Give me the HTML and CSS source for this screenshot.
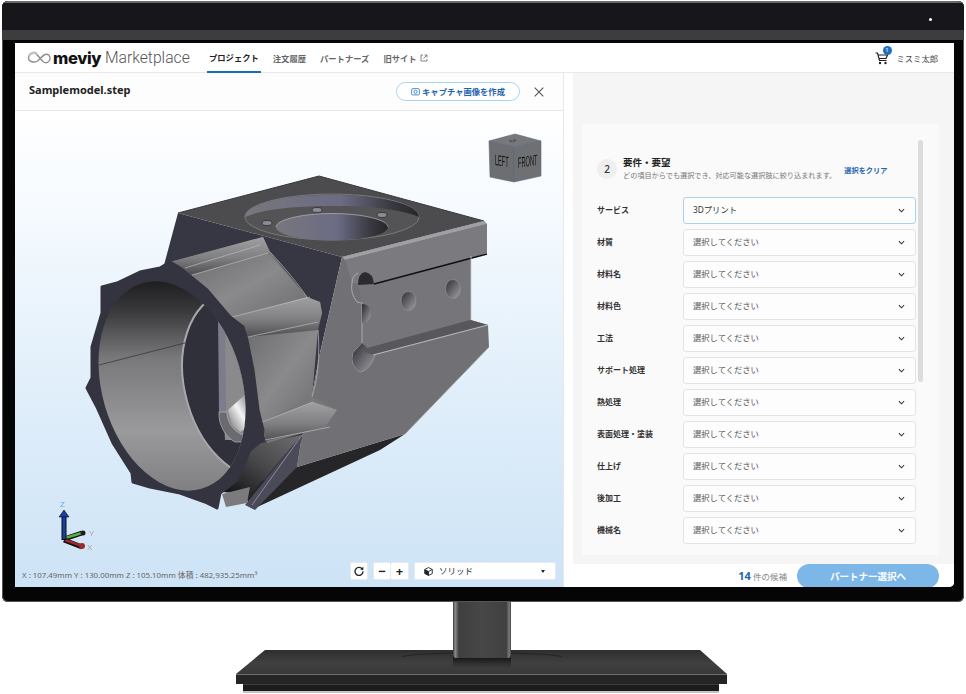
FILE: index.html
```html
<!DOCTYPE html>
<html lang="ja">
<head>
<meta charset="utf-8">
<title>meviy Marketplace</title>
<link rel="stylesheet" href="styles.css">
</head>
<body>
<div class="monitor">
  <div class="bezel-top"><span class="led"></span></div>
  <div class="bezel-band"></div>
  <div class="screen">
    <header class="app-header">
      <div class="logo">
        <svg class="logo-mark" viewBox="0 0 24 14"><path d="M1 7c0-3.500 3-5.500 6-5 3 .5 6 7 9 9 2.500 1.500 6 .5 6.500-3C23 4.500 20 2.500 17.500 3.500 15 4.500 13 7.500 10 10 7 12 1 11 1 7z" fill="none" stroke="#8e8e8e" stroke-width="1.400"/><path d="M1.500 5C3 1.500 7 1 9.500 3" fill="none" stroke="#c4c4c4" stroke-width="2.600"/></svg>
        <span class="logo-meviy">meviy</span>
        <span class="logo-market">Marketplace</span>
      </div>
      <nav class="nav">
        <a class="nav-item nav-active">プロジェクト</a>
        <a class="nav-item">注文履歴</a>
        <a class="nav-item">パートナーズ</a>
        <a class="nav-item">旧サイト<svg class="ext-icon" viewBox="0 0 8 8"><path d="M3 1H1v6h6V5M4.500 1H7v2.500M7 1 3.500 4.500" fill="none" stroke="#666" stroke-width=".8"/></svg></a>
      </nav>
      <div class="user">
        <span class="cart">
          <svg class="cart-icon" viewBox="0 0 14 14"><path d="M.5 2h2l2 7.500h7M3 4h9.500l-1.500 3.500H4.200" fill="none" stroke="#222" stroke-width="1.200"/><circle cx="5" cy="12" r="1.200" fill="#222"/><circle cx="10.500" cy="12" r="1.200" fill="#222"/></svg>
          <span class="badge">1</span>
        </span>
        <span class="user-name">ミスミ太郎</span>
      </div>
    </header>
    <main class="workspace">
      <section class="left-panel">
        <div class="title-bar">
          <h1 class="file-name">Samplemodel.step</h1>
          <button class="capture-btn"><svg class="cam-icon" viewBox="0 0 10 10"><rect x=".7" y="1.800" width="8.600" height="7" rx="1.200" fill="none" stroke="#2a76c0" stroke-width=".9"/><circle cx="5" cy="5.300" r="1.800" fill="none" stroke="#2a76c0" stroke-width=".9"/></svg>キャプチャ画像を作成</button>
          <svg class="close-icon" viewBox="0 0 10 10"><path d="M.7.700l8.600 8.600M9.300.700.700 9.300" stroke="#555" stroke-width="1.100"/></svg>
        </div>
        <div class="viewer">
          <svg class="scene" viewBox="15 111 549 476">
            <defs>
              <linearGradient id="wall" x1="0" y1="0" x2="0" y2="1">
                <stop offset="0" stop-color="#141416"/><stop offset=".18" stop-color="#3a3a3c"/><stop offset=".38" stop-color="#78787a"/><stop offset=".7" stop-color="#9a9a9c"/><stop offset="1" stop-color="#7c7c7e"/>
              </linearGradient>
              <linearGradient id="bore" x1="0" y1="0" x2="1" y2="0">
                <stop offset="0" stop-color="#77777d"/><stop offset=".55" stop-color="#6b6b85"/><stop offset=".85" stop-color="#38383f"/><stop offset="1" stop-color="#26262a"/>
              </linearGradient>
              <linearGradient id="band" x1="0" y1="0" x2="1" y2="1">
                <stop offset="0" stop-color="#6e6e70"/><stop offset=".5" stop-color="#8a8a8c"/><stop offset="1" stop-color="#6c6c6e"/>
              </linearGradient>
              <linearGradient id="rib" x1="0" y1="0" x2="0" y2="1">
                <stop offset="0" stop-color="#a0a0a2"/><stop offset=".55" stop-color="#808082"/><stop offset="1" stop-color="#4e4e50"/>
              </linearGradient>
              <linearGradient id="under" x1="1" y1="0" x2="0" y2="1">
                <stop offset="0" stop-color="#6e6e70"/><stop offset=".5" stop-color="#48484a"/><stop offset="1" stop-color="#111113"/>
              </linearGradient>
              <linearGradient id="hole" x1="0" y1="0" x2="1" y2="1">
                <stop offset="0" stop-color="#2c2c30"/><stop offset="1" stop-color="#a0a0a8"/>
              </linearGradient>
              <linearGradient id="shine" x1="0" y1="1" x2="1" y2="0">
                <stop offset="0" stop-color="#6a6a6c"/><stop offset=".5" stop-color="#f4f4f4"/><stop offset="1" stop-color="#5c5c5e"/>
              </linearGradient>
              <linearGradient id="shadow" x1="0" y1="0" x2="0" y2="1">
                <stop offset="0" stop-color="#181818"/><stop offset="1" stop-color="#181818" stop-opacity="0"/>
              </linearGradient>
              <clipPath id="opening"><ellipse cx="172" cy="386" rx="70" ry="107" transform="rotate(-16 172 386)"/></clipPath>
            </defs>

            <!-- dark side and base of the right face -->
            <polygon points="178,213 342,257 320,353 312,395 302,440 250,505 160,280" fill="#373744"/>
            <polygon points="297,467 405,434 380,450 253,509 240,490" fill="#262628"/>
            <polygon points="342,257 484,221 487,224 487,253 471,258 471,320 488,325 489,347 405,434 297,467 302,435 312,395 320,353" fill="#717175"/>

            <!-- top face -->
            <polygon points="178,213 319,176 484,221 342,257" fill="#4c4c4e"/>
            <polyline points="178,213 319,176 484,221" fill="none" stroke="#39393b" stroke-width="1"/>
            <ellipse cx="332" cy="217" rx="87" ry="23" fill="#545456" stroke="#8a8a8e" stroke-width=".7"/>
            <path d="M245 217c0-13 39-22 87-22s87 9 87 22c-18-8-50-11-87-11s-69 3-87 11z" fill="url(#bore)"/>
            <ellipse cx="332" cy="227" rx="56" ry="13.500" fill="url(#bore)"/>
            <path d="M276 227c0-7 25-13.500 56-13.500s56 6.500 56 13.500" fill="none" stroke="#aaaaae" stroke-width=".8"/>
            <ellipse cx="267" cy="223" rx="5" ry="2.500" fill="#8c8c96" stroke="#2e2e32" stroke-width=".8"/>
            <ellipse cx="317" cy="210" rx="5" ry="2.500" fill="#8c8c96" stroke="#2e2e32" stroke-width=".8"/>
            <ellipse cx="382" cy="215" rx="5" ry="2.500" fill="#8c8c96" stroke="#2e2e32" stroke-width=".8"/>

            <!-- right face: lips, recess, slots, holes -->
            <polygon points="342,257 484,221 487,224 345,260" fill="#a0a0a4"/>
            <polygon points="345,260 487,224 487,253 374,284 352,283" fill="#7b7b7f"/>
            <polygon points="362,303 358,285 374,284 471,258 471,320 362,350" fill="#76767a"/>
            <path d="M374 284 487 254" stroke="#111113" stroke-width="1.600"/>
            <path d="M471 256V320" stroke="#c8c8cc" stroke-width=".8"/>
            <path d="M358 285Q358 273 365 272 373 273 374 284z" fill="#2c2c30"/>
            <path d="M358 273Q352 276 352 283 350 293 357 302L362 303V343L353 353Q350 365 360 372 370 370 375 355" fill="none" stroke="#c0c0c4" stroke-width=".7"/>
            <path d="M353 353Q350 365 360 372 370 370 375 355L362 343z" fill="url(#hole)"/>
            <path d="M362 304c6 0 9 4 9 9 0 6-3 10-9 10z" fill="url(#hole)"/>
            <ellipse cx="408.500" cy="301" rx="7.500" ry="9.500" fill="url(#hole)" stroke="#9a9a9e" stroke-width=".5"/>
            <ellipse cx="453" cy="289" rx="7.500" ry="9.500" fill="url(#hole)" stroke="#9a9a9e" stroke-width=".5"/>
            <polygon points="360,350 470,320 488,325 373,355" fill="#58585c"/>
            <path d="M373 355 488 325" stroke="#b8b8bc" stroke-width="1.200"/>
            <path d="M405 434 489 347" stroke="#9a9a9e" stroke-width=".8"/>

            <!-- lower cylinder -->
            <polygon points="302,435 297,467 255,510 245,505" fill="#4a4a58"/>
            <polygon points="252,445 302,435 250,495 223,492" fill="url(#under)"/>
            <polygon points="222,494 250,487 247,503 226,507" fill="#7b7b7e"/>
            <path d="M302 435 252 505" stroke="#8a8a98" stroke-width="1"/>

            <!-- outer cylinder -->
            <polygon points="170,262 263,237 270,252 307,297 320,302 322,313 317,330 312,397 337,410 325,427 267,443 262,430 247,340 230,317 180,268" fill="#78787a"/>
            <polygon points="192,275 268,253 307,297 232,317" fill="url(#band)"/>
            <polygon points="248,337 318,330 312,397 262,422" fill="url(#band)"/>
            <polygon points="170,262 263,237 270,252 192,275 182,270" fill="url(#rib)"/>
            <polygon points="232,317 307,297 320,302 322,313 318,330 248,337" fill="url(#rib)"/>
            <polygon points="262,422 313,402 337,410 325,427 266,441" fill="url(#rib)"/>
            <path d="M270 252C285 268 298 284 307 297M185 268 260 245M192 275 268 253M232 317 310 297M248 337 318 322M262 422 313 402M265 440 330 427M318 330C320 355 318 378 312 397" fill="none" stroke="#bcbcc0" stroke-width=".7"/>

            <!-- front rim -->
            <polygon class="rim" points="170,262 180,268 207,290 230,317 243,327 247,340 253,370 258,410 263,430 262,440 250,450 237,480 220,493 217,508 205,502 180,493 150,487 133,482 132,473 113,443 97,407 87,388 92,378 92,347 102,313 102,287 117,283 140,272 160,268"/>

            <!-- bore interior -->
            <g clip-path="url(#opening)">
              <rect x="90" y="270" width="170" height="230" fill="url(#wall)"/>
              <ellipse cx="250" cy="385" rx="65" ry="96" transform="rotate(-16 250 385)" fill="#30303a" stroke="#a8a8ac" stroke-width="2"/>
              <polygon points="218,315 250,300 265,440 225,440" fill="#8a8a8c"/>
              <polygon points="218,315 225,318 226,412 219,412" fill="#7c7c8c"/>
              <path d="M219 412h8c0 14 12 24 22 24v6h-14c-8-4-17-16-16-30z" fill="#6a6a70" stroke="#c2c2c6" stroke-width=".6"/>
              <polygon points="228,410 248,392 252,425 240,432 232,425" fill="url(#shine)"/>
              <path d="M99 365 185 343" stroke="#3a3a3e" stroke-width=".8"/>
            </g>

            <!-- view cube -->
            <polygon points="489,141 515,134 541,141 514,147" fill="#77787b" stroke="#5a6c80" stroke-width=".6"/>
            <polygon points="489,141 514,147 514,182 490,177" fill="#6d6e71" stroke="#5a6c80" stroke-width=".6"/>
            <polygon points="541,141 514,147 514,182 541,176" fill="#6f7073" stroke="#5a6c80" stroke-width=".6"/>
            <text class="cube-text" transform="matrix(.37 .06 0 1 495 165)">LEFT</text>
            <text class="cube-text" transform="matrix(.377 -.06 0 1 518 168)">FRONT</text>
            <text class="cube-top" transform="rotate(-8 514 141) translate(509 142)">TOP</text>

            <!-- axis triad -->
            <path d="M64 539 82 533" stroke="#0e0e0e" stroke-width="5"/>
            <path d="M65 538 82 533" stroke="#5cae3e" stroke-width="2.500"/>
            <circle cx="83" cy="533" r="2.500" fill="#1c1c1c"/>
            <path d="M64 540 82 547" stroke="#0e0e0e" stroke-width="5"/>
            <path d="M65 540 82 546" stroke="#9c2a30" stroke-width="2.500"/>
            <circle cx="82" cy="546" r="3" fill="#9c2a30"/>
            <path d="M64 516V540" stroke="#0e0e0e" stroke-width="5"/>
            <path d="M64 516V539" stroke="#163fa0" stroke-width="3"/>
            <path d="M64 510 69 517H59z" fill="#163fa0" stroke="#0e0e0e" stroke-width=".6"/>
            <text class="axis-z" x="60" y="507">Z</text>
            <text class="axis-l" x="89" y="536">Y</text>
            <text class="axis-l" x="87" y="550">X</text>
          </svg>
          <div class="viewer-bar">
            <p class="stats">X : 107.49mm Y : 130.00mm Z : 105.10mm 体積 : 482,935.25mm³</p>
            <div class="controls">
              <button class="tool tool-reset"><svg class="reset-icon" viewBox="0 0 10 10"><path d="M8.300 3.200A4 4 0 1 0 9 5.200" fill="none" stroke="#222" stroke-width="1.300"/><path d="M6.200 3.600 9.300 4V.8z" fill="#222"/></svg></button>
              <div class="zoom-group">
                <button class="tool tool-zoom">−</button>
                <button class="tool tool-zoom tool-plus">+</button>
              </div>
              <div class="mode-select">
                <svg class="solid-icon" viewBox="0 0 10 10"><path d="M5 .6 9.200 2.800v4.500L5 9.400.8 7.300V2.800z" fill="none" stroke="#222" stroke-width="1"/><path d="M.8 2.800 5 5l4.200-2.200M5 5v4.400" fill="none" stroke="#222" stroke-width="1"/><path d="M5 5 .8 2.800V7.300L5 9.400z" fill="#222"/></svg>
                <span class="mode-label">ソリッド</span>
                <span class="caret"></span>
              </div>
            </div>
          </div>
        </div>
      </section>
      <section class="right-panel">
        <div class="gray-area">
          <div class="card">
            <span class="scrollbar"></span>
            <div class="card-head">
              <span class="step-num">2</span>
              <div class="head-text">
                <h2 class="head-title">要件・要望</h2>
                <p class="head-sub">どの項目からでも選択でき、対応可能な選択肢に絞り込まれます。</p>
              </div>
              <a class="clear-link">選択をクリア</a>
            </div>
            <div class="form">
              <div class="row"><span class="row-label">サービス</span><div class="select select-on">3Dプリント<svg class="chev" viewBox="0 0 8 5"><path d="M1 1l3 3 3-3" fill="none" stroke="#333" stroke-width="1.200"/></svg></div></div>
              <div class="row"><span class="row-label">材質</span><div class="select">選択してください<svg class="chev" viewBox="0 0 8 5"><path d="M1 1l3 3 3-3" fill="none" stroke="#333" stroke-width="1.200"/></svg></div></div>
              <div class="row"><span class="row-label">材料名</span><div class="select">選択してください<svg class="chev" viewBox="0 0 8 5"><path d="M1 1l3 3 3-3" fill="none" stroke="#333" stroke-width="1.200"/></svg></div></div>
              <div class="row"><span class="row-label">材料色</span><div class="select">選択してください<svg class="chev" viewBox="0 0 8 5"><path d="M1 1l3 3 3-3" fill="none" stroke="#333" stroke-width="1.200"/></svg></div></div>
              <div class="row"><span class="row-label">工法</span><div class="select">選択してください<svg class="chev" viewBox="0 0 8 5"><path d="M1 1l3 3 3-3" fill="none" stroke="#333" stroke-width="1.200"/></svg></div></div>
              <div class="row"><span class="row-label">サポート処理</span><div class="select">選択してください<svg class="chev" viewBox="0 0 8 5"><path d="M1 1l3 3 3-3" fill="none" stroke="#333" stroke-width="1.200"/></svg></div></div>
              <div class="row"><span class="row-label">熱処理</span><div class="select">選択してください<svg class="chev" viewBox="0 0 8 5"><path d="M1 1l3 3 3-3" fill="none" stroke="#333" stroke-width="1.200"/></svg></div></div>
              <div class="row"><span class="row-label">表面処理・塗装</span><div class="select">選択してください<svg class="chev" viewBox="0 0 8 5"><path d="M1 1l3 3 3-3" fill="none" stroke="#333" stroke-width="1.200"/></svg></div></div>
              <div class="row"><span class="row-label">仕上げ</span><div class="select">選択してください<svg class="chev" viewBox="0 0 8 5"><path d="M1 1l3 3 3-3" fill="none" stroke="#333" stroke-width="1.200"/></svg></div></div>
              <div class="row"><span class="row-label">後加工</span><div class="select">選択してください<svg class="chev" viewBox="0 0 8 5"><path d="M1 1l3 3 3-3" fill="none" stroke="#333" stroke-width="1.200"/></svg></div></div>
              <div class="row"><span class="row-label">機械名</span><div class="select">選択してください<svg class="chev" viewBox="0 0 8 5"><path d="M1 1l3 3 3-3" fill="none" stroke="#333" stroke-width="1.200"/></svg></div></div>
            </div>
          </div>
        </div>
        <div class="footer">
          <span class="count"><b class="count-num">14</b> 件の候補</span>
          <button class="next-btn">パートナー選択へ</button>
        </div>
      </section>
    </main>
  </div>
</div>
<svg class="stand" viewBox="0 602 966 92">
  <defs>
    <linearGradient id="neck" x1="0" y1="0" x2="1" y2="0">
      <stop offset="0" stop-color="#3e3e3e"/><stop offset=".04" stop-color="#8a8a8a"/><stop offset=".1" stop-color="#3f3f3f"/><stop offset=".5" stop-color="#474747"/><stop offset=".92" stop-color="#404040"/><stop offset=".97" stop-color="#7c7c7c"/><stop offset="1" stop-color="#3e3e3e"/>
    </linearGradient>
    <linearGradient id="base" x1="0" y1="0" x2="0" y2="1">
      <stop offset="0" stop-color="#2e2e2e"/><stop offset=".55" stop-color="#404040"/><stop offset="1" stop-color="#383838"/>
    </linearGradient>
    <linearGradient id="neck-shadow" x1="0" y1="0" x2="0" y2="1">
      <stop offset="0" stop-color="#141414"/><stop offset="1" stop-color="#141414" stop-opacity="0"/>
    </linearGradient>
  </defs>
  <polygon points="265,650 700,650 727,674 236,674" fill="url(#base)"/>
  <path d="M402 657c4-2 18-3 51-4M511 653c30 1 47 2 51 4" fill="none" stroke="#1e1e1e" stroke-width=".8"/>
  <rect x="453" y="656" width="58" height="12" fill="url(#neck-shadow)"/>
  <path d="M453 602h58v53c0 2-1 3-3 3h-52c-2 0-3-1-3-3z" fill="url(#neck)"/>
  <rect x="236" y="674" width="491" height="10" fill="#252525"/>
  <rect x="236" y="674" width="491" height="1" fill="#6e6e6e"/>
  <rect x="243" y="684" width="476" height="7" fill="#1c1c1c"/>
  <rect x="243" y="684" width="476" height="1" fill="#3e3e3e"/>
  <rect x="243" y="691" width="476" height="2" fill="#c4c4c4"/>
</svg>
</body>
</html>
```

FILE: styles.css
```css
* { box-sizing: border-box; }
html, body { margin: 0; padding: 0; background: #fff; }
body {
  width: 966px;
  height: 694px;
  overflow: hidden;
  font-family: "Noto Sans", "Noto Sans CJK JP", sans-serif;
  color: #333;
}
h1, h2, p { margin: 0; }
button { font-family: inherit; padding: 0; cursor: pointer; }

.monitor {
  width: 962px;
  height: 601px;
  margin: 1px 0 0 2px;
  padding: 0 10px 0 13px;
  background: #050505;
  border-radius: 6px;
  box-shadow: inset 0 -1px 0 #555, inset 1px 0 0 #555, inset -1px 0 0 #555;
  overflow: hidden;
}
.bezel-top {
  height: 29px;
  margin: 0 -10px 0 -13px;
  background: #17171b;
  border-top: 2px solid #6a6a6a;
  position: relative;
}
.led {
  position: absolute;
  left: 927px;
  top: 15px;
  width: 3px;
  height: 3px;
  border-radius: 50%;
  background: #fff;
}
.bezel-band {
  height: 10px;
  margin: 0 -10px 3px -13px;
  background: #3d3d3f;
}
.screen {
  width: 939px;
  height: 544px;
  background: #fff;
  border-radius: 0 0 5px 0;
  overflow: hidden;
  display: flex;
  flex-direction: column;
}

/* header */
.app-header {
  height: 30px;
  flex: none;
  display: flex;
  align-items: center;
  padding: 0 16px 0 12px;
  background: #fff;
  border-bottom: 1px solid #e9e9e9;
}
.logo { display: flex; align-items: center; width: 180px; }
.logo-mark { width: 25px; height: 14px; flex: none; }
.logo-meviy {
  margin-left: 1px;
  font: 800 16.500px "Inter", "Liberation Sans", sans-serif;
  letter-spacing: -.4px;
  color: #111;
}
.logo-market {
  margin-left: 4px;
  font: 300 15.700px "Roboto", "Liberation Sans", sans-serif;
  color: #555;
}
.nav { display: flex; height: 30px; }
.nav-item {
  display: flex;
  align-items: center;
  font-size: 8.300px;
  font-weight: 700;
  color: #666;
  margin-right: 14px;
}
.nav-active {
  color: #222;
  padding: 0 2px;
  margin-right: 12px;
  border-bottom: 2px solid #1a6bb8;
}
.ext-icon { width: 8px; height: 8px; margin-left: 3px; }
.user { margin-left: auto; display: flex; align-items: center; }
.cart { position: relative; display: block; width: 13px; height: 14px; margin-right: 9px; }
.cart-icon { width: 14px; height: 14px; display: block; }
.badge {
  position: absolute;
  right: -4px;
  top: -5px;
  width: 9px;
  height: 9px;
  border-radius: 50%;
  background: #1f6fc2;
  color: #fff;
  font-size: 6px;
  line-height: 9px;
  text-align: center;
}
.user-name { font-size: 8.300px; color: #444; }

/* main */
.workspace { flex: 1; display: flex; min-height: 0; }
.left-panel {
  width: 549px;
  flex: none;
  display: flex;
  flex-direction: column;
  border-right: 1px solid #e8e8e8;
}
.title-bar {
  height: 38px;
  flex: none;
  display: flex;
  align-items: center;
  padding: 0 19px 0 14px;
  border-bottom: 1px solid #e8e8e8;
  background: #fdfdfd;
}
.file-name { font-size: 11px; font-weight: 700; color: #222; margin-bottom: 5px; }
.capture-btn {
  margin-left: auto;
  width: 124px;
  height: 19px;
  margin-bottom: 1px;
  display: flex;
  align-items: center;
  justify-content: center;
  border: 1px solid #a9d2f2;
  border-radius: 10px;
  background: #fff;
  color: #1f63ad;
  font-size: 8.300px;
  font-weight: 700;
}
.cam-icon { width: 9px; height: 9px; margin-right: 2px; }
.close-icon { width: 10px; height: 10px; margin-left: 14px; }

.viewer {
  flex: 1;
  position: relative;
  display: flex;
  flex-direction: column;
  justify-content: flex-end;
  padding: 0 7px 7px;
  background: linear-gradient(#fff 0%, #f3f9fe 25%, #e0eefa 60%, #cde3f6 100%);
}
.scene { position: absolute; left: 0; top: 0; width: 549px; height: 476px; filter: blur(.3px); }
.rim { fill: #343441; stroke: #343441; stroke-width: 3; stroke-linejoin: round; }
.cube-text { font: 15px "Liberation Sans", sans-serif; fill: #111; }
.cube-top { font: 3.500px "Liberation Sans", sans-serif; fill: #222; }
.axis-z { font: 8px "Liberation Sans", sans-serif; fill: #6aa5e0; }
.axis-l { font: 8px "Liberation Sans", sans-serif; fill: #a8a8a8; }

.viewer-bar { position: relative; display: flex; align-items: flex-end; }
.stats { font-size: 7.850px; color: #666; line-height: 11px; margin-bottom: -1px; }
.controls { margin-left: auto; display: flex; height: 18px; }
.tool {
  height: 18px;
  background: #fff;
  border: 1px solid #eaeaea;
  border-radius: 2px;
  display: flex;
  align-items: center;
  justify-content: center;
  color: #222;
}
.tool-reset { width: 18px; margin-right: 5px; }
.reset-icon { width: 10px; height: 10px; }
.zoom-group { display: flex; width: 36px; margin-right: 5px; }
.tool-zoom { width: 18px; font-size: 13px; font-weight: 700; line-height: 1; }
.tool-plus { border-left: 0; }
.mode-select {
  width: 142px;
  height: 18px;
  display: flex;
  align-items: center;
  padding: 0 9px;
  background: #fff;
  border: 1px solid #eaeaea;
  border-radius: 2px;
}
.solid-icon { width: 9px; height: 9px; margin-right: 6px; }
.mode-label { font-size: 8.500px; color: #333; padding-bottom: 2px; }
.caret {
  margin-left: auto;
  margin-right: 1px;
  width: 0;
  height: 0;
  border-left: 2.500px solid transparent;
  border-right: 2.500px solid transparent;
  border-top: 3px solid #222;
}

/* right */
.right-panel {
  flex: 1;
  min-width: 0;
  display: flex;
  flex-direction: column;
  padding-left: 9px;
  background: #fff;
}
.gray-area {
  height: 491px;
  flex: none;
  padding: 51px 15px 9px 9px;
  background: #f5f5f5;
}
.card {
  position: relative;
  height: 431px;
  padding: 35px 23px 0 15px;
  background: #fafafa;
}
.scrollbar {
  position: absolute;
  left: 336px;
  top: 16px;
  width: 5px;
  height: 242px;
  border-radius: 3px;
  background: #dcdcdc;
}
.card-head { display: flex; align-items: flex-start; height: 38px; }
.step-num {
  width: 20px;
  height: 20px;
  flex: none;
  border-radius: 50%;
  background: #efefef;
  color: #333;
  font-size: 10px;
  font-weight: 500;
  text-align: center;
  line-height: 20px;
}
.head-text { margin-left: 6px; margin-top: -2px; }
.head-title { font-size: 9.500px; font-weight: 700; color: #222; line-height: 12px; }
.head-sub { font-size: 7.170px; color: #777; line-height: 11px; margin-top: 1px; }
.clear-link {
  margin-left: 8px;
  margin-top: 5px;
  font-size: 7.200px;
  font-weight: 700;
  color: #1f63ad;
  line-height: 12px;
}
.form { display: flex; flex-direction: column; gap: 5px; }
.row { display: flex; align-items: center; height: 27px; }
.row-label { width: 86px; flex: none; font-size: 8px; font-weight: 700; color: #333; padding-bottom: 2px; }
.select {
  flex: 1;
  height: 27px;
  display: flex;
  align-items: center;
  padding: 0 10px 3px 9px;
  background: #fdfdfd;
  border: 1px solid #e4e4e4;
  border-radius: 3px;
  font-size: 8.300px;
  color: #555;
}
.select-on { border-color: #a9d2f2; color: #333; }
.chev { width: 7px; height: 5px; margin-left: auto; position: relative; top: 1px; }

.footer {
  flex: 1;
  display: flex;
  align-items: flex-start;
  justify-content: flex-end;
  padding-right: 15px;
  background: #fff;
}
.count { font-size: 8.500px; color: #888; margin-right: 10px; line-height: 24px; }
.count-num { font-size: 11px; font-weight: 700; color: #1f63ad; }
.next-btn {
  width: 142px;
  height: 24px;
  border: 0;
  border-radius: 12px;
  background: #7db7e8;
  color: #fff;
  font-size: 9.500px;
  font-weight: 700;
}

.stand { display: block; width: 966px; height: 92px; }
```
